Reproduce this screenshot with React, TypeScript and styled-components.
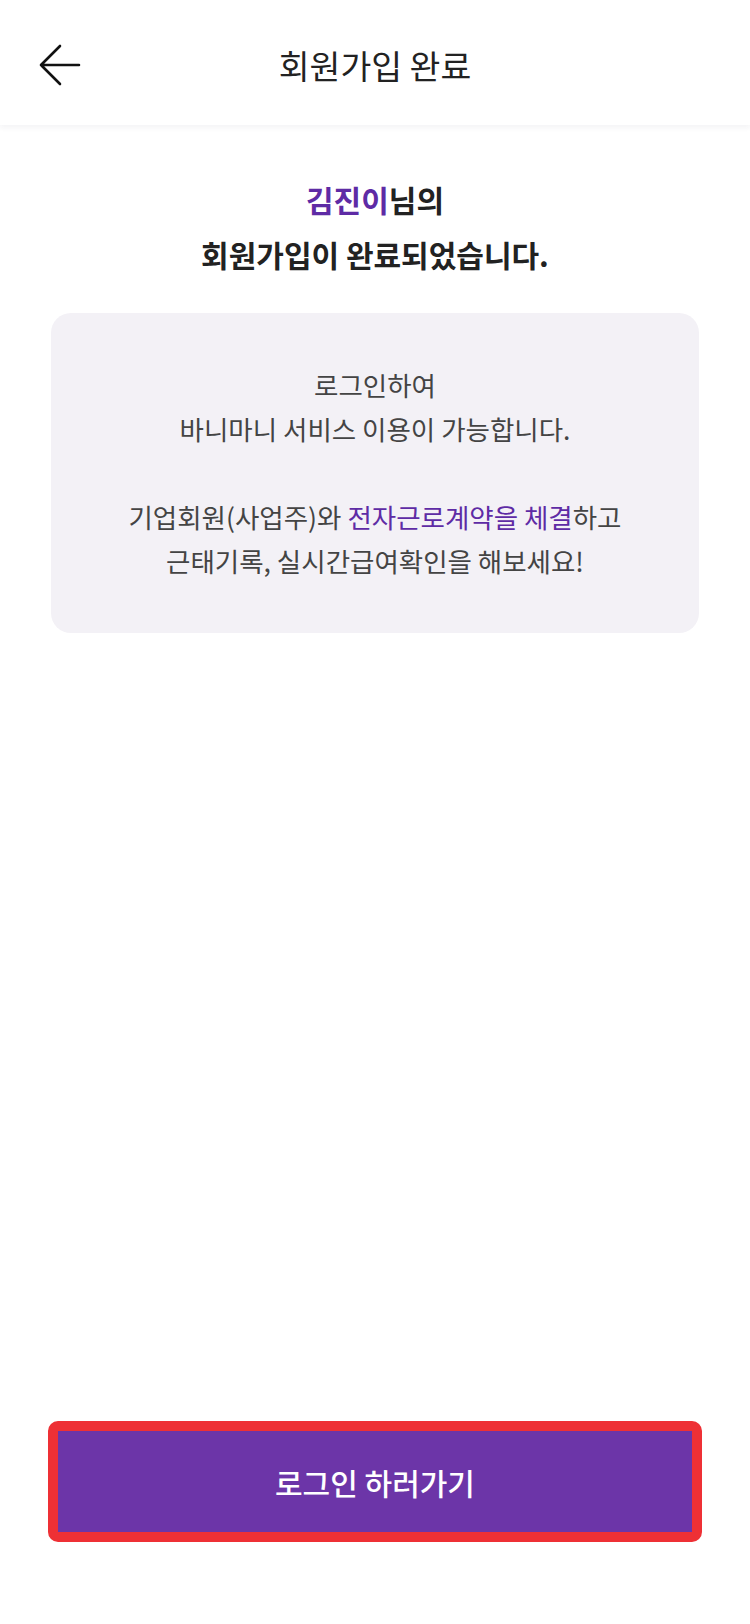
import React from "react";
import styled, { createGlobalStyle } from "styled-components";

const GlobalStyle = createGlobalStyle`
	html, body {
		margin: 0;
		padding: 0;
		background-color: white;
	}
	* {
		box-sizing: border-box;
	}
	body {
		font-family: "Noto Sans CJK KR", "Noto Sans", sans-serif;
	}
`;

const BackArrow = () => (
	<svg width='44' height='44' viewBox='0 0 44 44' fill='none'>
		<path
			d='M41 22H3M3 22L22 3M3 22L22 41'
			stroke='#111'
			strokeWidth='2.6'
			strokeLinecap='round'
			strokeLinejoin='round'
		/>
	</svg>
);

const App = () => {
	return (
		<Container>
			<GlobalStyle />
			<Header>
				<BackButton aria-label='back'>
					<BackArrow />
				</BackButton>
				<HeaderTitle>회원가입 완료</HeaderTitle>
			</Header>

			<Greeting>
				<Line>
					<Name>김진이</Name>님의
				</Line>
				<Line>회원가입이 완료되었습니다.</Line>
			</Greeting>

			<InfoCard>
				<InfoLine>로그인하여</InfoLine>
				<InfoLine>바니마니 서비스 이용이 가능합니다.</InfoLine>
				<InfoLine>&nbsp;</InfoLine>
				<InfoLine>
					기업회원(사업주)와 <Accent>전자근로계약을 체결</Accent>하고
				</InfoLine>
				<InfoLine>근태기록, 실시간급여확인을 해보세요!</InfoLine>
			</InfoCard>

			<Spacer />

			<ButtonHold>
				<LoginButton>로그인 하러가기</LoginButton>
			</ButtonHold>
		</Container>
	);
};

export default App;

const Container = styled.div`
	width: 100%;
	min-height: 100vh;
	display: flex;
	flex-direction: column;
	background-color: white;
`;

const Header = styled.div`
	position: relative;
	height: 125px;
	display: flex;
	align-items: center;
	justify-content: center;
	background-color: white;
	box-shadow: rgba(30, 30, 80, 0.05) 0px 3px 5px;
`;

const BackButton = styled.button`
	position: absolute;
	left: 38px;
	top: 43px;
	padding: 0;
	border: none;
	background: none;
	display: flex;
`;

const HeaderTitle = styled.div`
	font-size: 33.5px;
	font-weight: 400;
	color: #222;
	margin-top: 3px;
`;

const Greeting = styled.div`
	margin-top: 47px;
	display: flex;
	flex-direction: column;
	align-items: center;
`;

const Line = styled.div`
	font-size: 30px;
	font-weight: 700;
	line-height: 55px;
	color: #222;
`;

const Name = styled.span`
	color: #5e2ba5;
`;

const InfoCard = styled.div`
	margin: 31px 51px 0;
	padding: 50px 0 50px;
	background-color: #f3f1f6;
	border-radius: 20px;
	display: flex;
	flex-direction: column;
	align-items: center;
`;

const InfoLine = styled.div`
	font-size: 26.5px;
	line-height: 44px;
	color: #444;
`;

const Accent = styled.span`
	color: #5e2ba5;
`;

const Spacer = styled.div`
	flex: 1;
`;

const ButtonHold = styled.div`
	padding: 0 48px 82px;
`;

const LoginButton = styled.button`
	width: 100%;
	height: 121px;
	border: 10px solid #ee3035;
	border-radius: 10px;
	background-color: #6c35a8;
	background-clip: padding-box;
	color: white;
	font-family: "Noto Sans CJK KR", "Noto Sans", sans-serif;
	font-size: 30px;
	font-weight: 500;
	display: flex;
	align-items: center;
	justify-content: center;
	padding: 0;
`;
